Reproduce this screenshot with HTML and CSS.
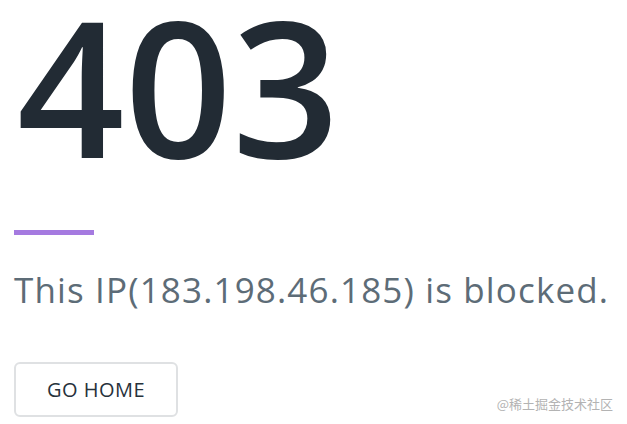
FILE: index.html
```html
<!DOCTYPE html>
<html lang="en">
<head>
<meta charset="utf-8">
<title>403</title>
<link rel="stylesheet" href="styles.css">
</head>
<body>
<main class="page">
  <h1 class="code">403</h1>
  <div class="divider"></div>
  <p class="message">This IP(183.198.46.185) is blocked.</p>
  <a class="btn" href="#">GO HOME</a>
</main>
<span class="watermark">@稀土掘金技术社区</span>
</body>
</html>
```
FILE: styles.css
```css
html, body {
  margin: 0;
  padding: 0;
  background: #ffffff;
}
body {
  width: 627px;
  height: 424px;
  overflow: hidden;
  position: relative;
  font-family: "Open Sans", "Noto Sans", sans-serif;
}
.page {
  display: flex;
  flex-direction: column;
  align-items: flex-start;
  padding-left: 14px;
}
.code {
  margin: 10px 0 0 3px;
  font-size: 188px;
  line-height: 150px;
  font-weight: 600;
  color: #222b34;
  letter-spacing: 0;
}
.divider {
  margin-top: 70px;
  width: 80px;
  height: 5px;
  background: #a57ae0;
}
.message {
  margin: 37px 0 0 0;
  font-size: 35px;
  line-height: 1;
  font-weight: 400;
  color: #5d6c77;
  letter-spacing: 1.15px;
  white-space: nowrap;
}
.btn {
  margin-top: 55px;
  box-sizing: border-box;
  width: 164px;
  height: 55px;
  display: flex;
  align-items: center;
  justify-content: center;
  border: 2px solid #dfe1e3;
  border-radius: 6px;
  font-size: 20px;
  font-weight: 500;
  letter-spacing: 0.5px;
  color: #27323b;
  text-decoration: none;
}
.watermark {
  position: absolute;
  right: 14px;
  bottom: 14px;
  font-family: "Noto Sans CJK SC", sans-serif;
  font-size: 13px;
  line-height: 1;
  color: #b3b3b3;
}
```
